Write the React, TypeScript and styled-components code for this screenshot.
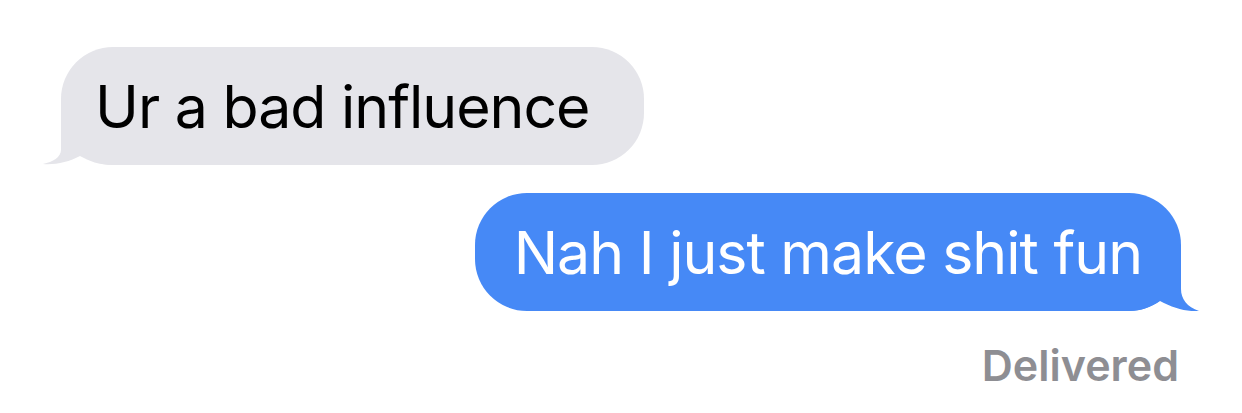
import styled, { createGlobalStyle } from 'styled-components';

type Side = 'them' | 'me';

const GlobalStyle = createGlobalStyle`
  html, body {
    margin: 0;
    padding: 0;
    background: #ffffff;
  }

  body {
    font-family: Inter, 'Liberation Sans', Arial, sans-serif;
    -webkit-font-smoothing: antialiased;
  }
`;

const messages: { side: Side; text: string }[] = [
  { side: 'them', text: 'Ur a bad influence' },
  { side: 'me', text: 'Nah I just make shit fun' },
];

export default function App(): JSX.Element {
  return (
    <>
      <GlobalStyle />
      <Thread>
        {messages.map((m, i) => (
          <Bubble key={i} $side={m.side}>
            {m.text}
            <Tail side={m.side} />
          </Bubble>
        ))}
        <Status>Delivered</Status>
      </Thread>
    </>
  );
}

// little curled tail under the bubble's bottom corner
const Tail = ({ side }: { side: Side }): JSX.Element =>
  side === 'them' ? (
    <TailSvg $side={side} width="80" height="70" viewBox="0 0 80 70">
      <path d="M20 8 L20 55 C20 62 12 67 2 69 C14 70 28 67 39 61 C48 66 58 70 72 70 L72 8 Z" />
    </TailSvg>
  ) : (
    <TailSvg $side={side} width="80" height="70" viewBox="0 0 80 70">
      <path d="M60 8 L60 48 C60 58 66 66 78 70 C66 71 52 67 39 60 C30 66 20 70 8 70 L8 8 Z" />
    </TailSvg>
  );

const Thread = styled.div`
  display: flex;
  flex-direction: column;
  width: 1242px;
  height: 413px;
  padding-top: 47px;
  box-sizing: border-box;
  overflow: hidden;
`;

const Bubble = styled.div<{ $side: Side }>`
  position: relative;
  z-index: 0;
  display: flex;
  align-items: center;
  height: 118px;
  border-radius: 52px;
  font-size: 59px;
  font-weight: 400;
  letter-spacing: -1px;
  white-space: nowrap;
  box-sizing: border-box;
  align-self: ${p => (p.$side === 'them' ? 'flex-start' : 'flex-end')};
  background: ${p => (p.$side === 'them' ? '#e5e5ea' : '#4689f6')};
  color: ${p => (p.$side === 'them' ? '#000000' : '#ffffff')};
  fill: ${p => (p.$side === 'them' ? '#e5e5ea' : '#4689f6')};
  margin: ${p => (p.$side === 'them' ? '0 0 28px 61px' : '0 61px 0 0')};
  padding: ${p => (p.$side === 'them' ? '0 54px 0 34px' : '0 39px 0 39px')};
`;

const TailSvg = styled.svg<{ $side: Side }>`
  position: absolute;
  bottom: 0;
  ${p => (p.$side === 'them' ? 'left: -20px;' : 'right: -20px;')}
  z-index: -1;
  pointer-events: none;
`;

const Status = styled.div`
  align-self: flex-end;
  margin: 28px 63px 0 0;
  font-size: 43px;
  font-weight: 600;
  color: #8e8e93;
`;
